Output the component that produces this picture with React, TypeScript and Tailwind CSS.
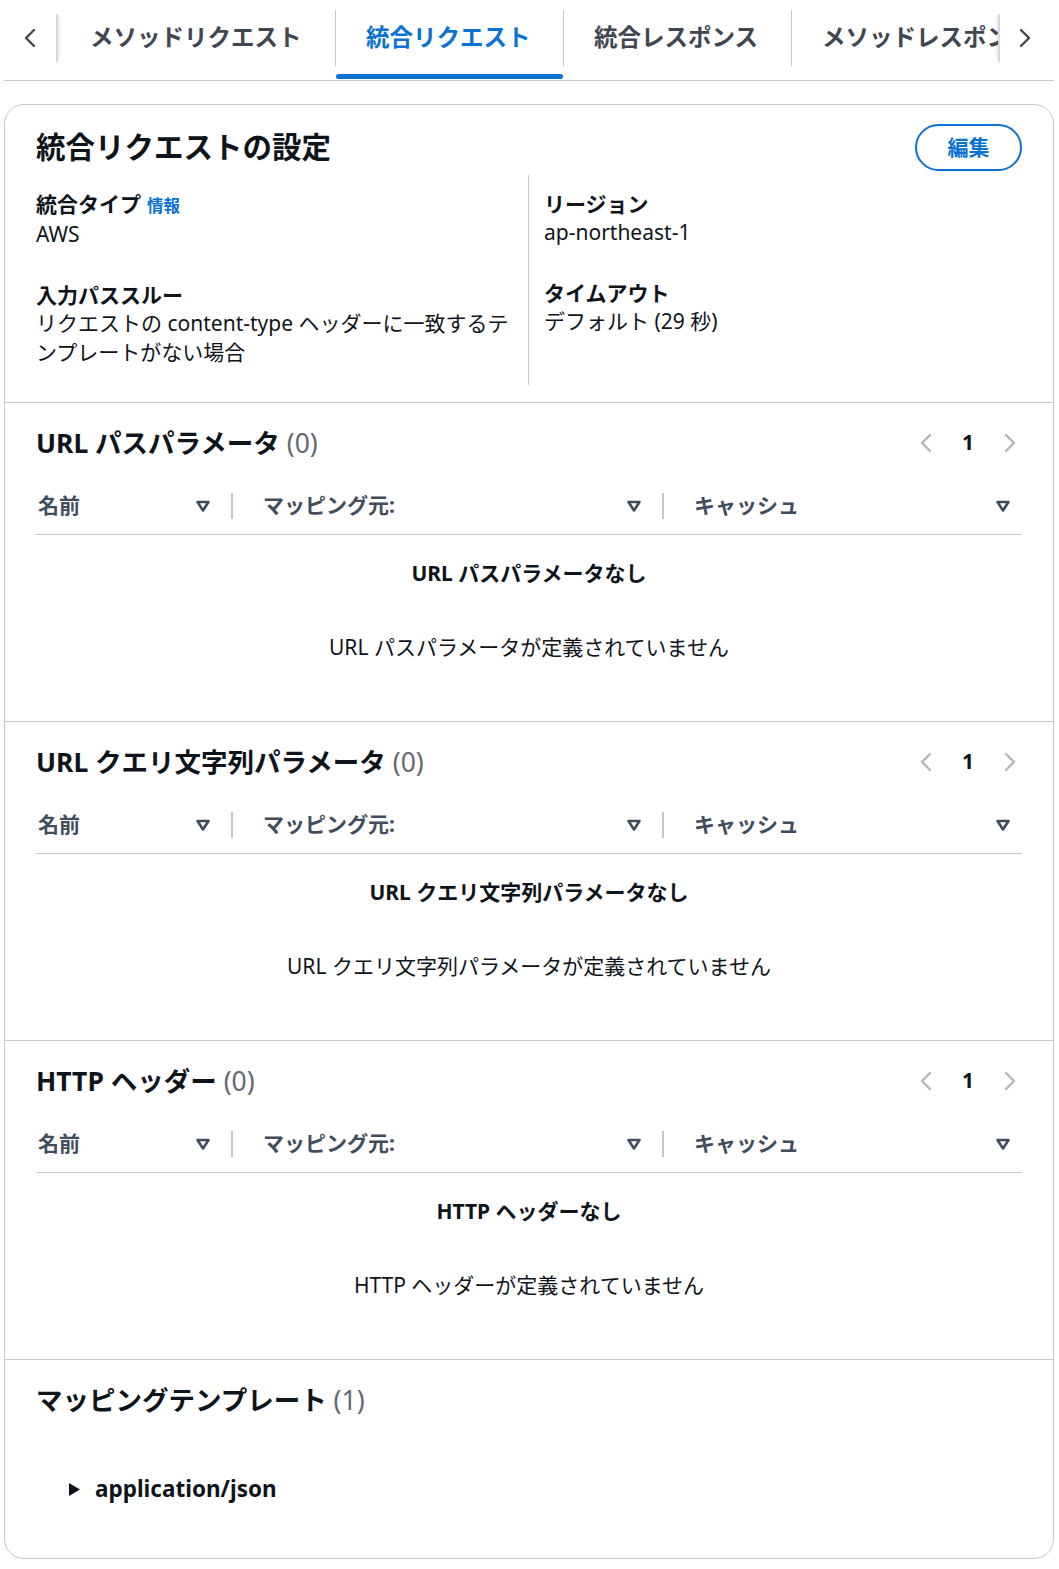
import React from 'react'

const Filter = () => (
  <svg width="16" height="14" viewBox="0 0 16 14" className="shrink-0">
    <path d="M2.5 3h11L8 11.5z" fill="none" stroke="#414d5c" strokeWidth="2.6" strokeLinejoin="round" />
  </svg>
)

const Chevron = ({ dir, color }: { dir: 'left' | 'right'; color: string }) => (
  <svg width="14" height="22" viewBox="0 0 14 22" className="shrink-0">
    <path
      d={dir === 'left' ? 'M11 3 3 11l8 8' : 'M3 3l8 8-8 8'}
      fill="none"
      stroke={color}
      strokeWidth="2.4"
      strokeLinecap="round"
      strokeLinejoin="round"
    />
  </svg>
)

const tabs = ['メソッドリクエスト', '統合リクエスト', '統合レスポンス', 'メソッドレスポンス']
const tabWidths = ['w-[275px]', 'w-[227px]', 'w-[227px]', 'w-[260px]']

const Tabs = () => (
  <div className="flex h-[81px] border-b border-[#c6c6cd]">
    <div className="flex h-[80px] w-[56px] shrink-0 items-start">
      <div className="ml-[11px] mt-[14px] flex h-[48px] w-[43px] items-center pl-[8px] shadow-[3px_0_3px_-2px_rgba(0,0,0,0.12)] border-r-2 border-[#d8d8dc]">
        <Chevron dir="left" color="#424650" />
      </div>
    </div>
    <div className="flex min-w-0 flex-1 overflow-hidden">
      {tabs.map((t, i) => (
        <React.Fragment key={t}>
          <div className={`flex h-[80px] shrink-0 flex-col ${tabWidths[i]}`}>
            <span
              className={`whitespace-nowrap pl-[30px] pt-[22px] text-[23.5px] leading-[30px] font-bold ${
                i === 1 ? 'text-[#0972d3]' : 'text-[#424650]'
              }`}
            >
              {t}
            </span>
            {i === 1 && <div className="mt-auto mb-[1px] h-[5px] rounded-full bg-[#0972d3]" />}
          </div>
          {i < tabs.length - 1 && <div className="mt-[10px] h-[56px] w-px shrink-0 bg-[#c6c6cd]" />}
        </React.Fragment>
      ))}
    </div>
    <div className="flex h-[80px] w-[56px] shrink-0 items-start">
      <div className="mt-[14px] flex h-[48px] w-[44px] items-center justify-end pr-[10px] shadow-[-3px_0_3px_-2px_rgba(0,0,0,0.12)] border-l-2 border-[#d8d8dc]">
        <Chevron dir="right" color="#424650" />
      </div>
    </div>
  </div>
)

const Field = ({ label, children, info }: { label: string; children: React.ReactNode; info?: boolean }) => (
  <div className="text-[21px] text-[#0f141a]">
    <div className="leading-[30px] font-bold">
      {label}
      {info && <span className="ml-[6px] text-[16.5px] text-[#0972d3]">情報</span>}
    </div>
    <div className="-mt-[1px] leading-[29px]">{children}</div>
  </div>
)

const Pager = () => (
  <div className="flex items-center gap-[29px] pr-[5px]">
    <Chevron dir="left" color="#b4b4bb" />
    <span className="text-[21px] font-bold text-[#0f141a]">1</span>
    <Chevron dir="right" color="#b4b4bb" />
  </div>
)

const Divider = () => <div className="h-[26px] w-[2px] shrink-0 bg-[#c6c6cd]" />

const ParamSection = ({ title, empty, desc }: { title: string; empty: string; desc: string }) => (
  <section className="border-t border-[#c6c6cd] px-[31px] pt-[22px] pb-[59px]">
    <div className="flex h-[36px] items-center justify-between">
      <h2 className="text-[26.5px] leading-[36px] font-bold text-[#0f141a]">
        {title} <span className="font-normal text-[#656871]">(0)</span>
      </h2>
      <Pager />
    </div>
    <div className="mt-[16px] flex h-[58px] items-center border-b border-[#c6c6cd] text-[21px] font-bold text-[#414d5c]">
      <div className="flex w-[195px] shrink-0 items-center pr-[20px]">
        <span className="flex-1 pl-[2px]">名前</span>
        <Filter />
      </div>
      <Divider />
      <div className="flex w-[429px] shrink-0 items-center pl-[30px] pr-[20px]">
        <span className="flex-1">マッピング元:</span>
        <Filter />
      </div>
      <Divider />
      <div className="flex flex-1 items-center pl-[30px] pr-[11px]">
        <span className="flex-1">キャッシュ</span>
        <Filter />
      </div>
    </div>
    <div className="flex flex-col items-center pt-[23px] text-[21px] leading-[30px] text-[#0f141a]">
      <p className="font-bold">{empty}</p>
      <p className="mt-[44px]">{desc}</p>
    </div>
  </section>
)

export default function App() {
  return (
    <div className="min-h-[1569px] bg-white pl-[4px] pr-[5px] pb-[11px] font-['Noto_Sans','Noto_Sans_CJK_JP',sans-serif]">
      <Tabs />
      <div className="mt-[23px] overflow-hidden rounded-[20px] border border-[#c6c6cd]">
        <section className="px-[31px] pt-[19px] pb-[17px]">
          <div className="flex h-[47px] items-center justify-between">
            <h1 className="text-[29.5px] font-bold text-[#0f141a]">統合リクエストの設定</h1>
            <button className="h-[47px] w-[107px] rounded-full border-2 border-[#0972d3] text-[21px] font-bold text-[#0972d3]">
              編集
            </button>
          </div>
          <div className="mt-[4px] flex">
            <div className="flex w-[492px] shrink-0 flex-col gap-[31px] pt-[14px] pb-[18px] pr-[16px]">
              <Field label="統合タイプ" info>
                AWS
              </Field>
              <Field label="入力パススルー">
                リクエストの content-type ヘッダーに一致するテンプレートがない場合
              </Field>
            </div>
            <div className="flex flex-1 flex-col gap-[31px] border-l border-[#c6c6cd] pt-[14px] pb-[18px] pl-[15px]">
              <Field label="リージョン">ap-northeast-1</Field>
              <Field label="タイムアウト">デフォルト (29 秒)</Field>
            </div>
          </div>
        </section>
        <ParamSection
          title="URL パスパラメータ"
          empty="URL パスパラメータなし"
          desc="URL パスパラメータが定義されていません"
        />
        <ParamSection
          title="URL クエリ文字列パラメータ"
          empty="URL クエリ文字列パラメータなし"
          desc="URL クエリ文字列パラメータが定義されていません"
        />
        <ParamSection title="HTTP ヘッダー" empty="HTTP ヘッダーなし" desc="HTTP ヘッダーが定義されていません" />
        <section className="border-t border-[#c6c6cd] px-[31px] pt-[22px] pb-[54px]">
          <h2 className="text-[26.5px] leading-[36px] font-bold text-[#0f141a]">
            マッピングテンプレート <span className="font-normal text-[#656871]">(1)</span>
          </h2>
          <div className="mt-[56px] flex items-center pl-[32px] text-[22.5px] leading-[30px] font-bold text-[#0f141a]">
            <svg width="13" height="15" viewBox="0 0 13 15" className="mr-[14px]">
              <path d="M1 1l11 6.5L1 14z" fill="#0f141a" />
            </svg>
            application/json
          </div>
        </section>
      </div>
    </div>
  )
}
